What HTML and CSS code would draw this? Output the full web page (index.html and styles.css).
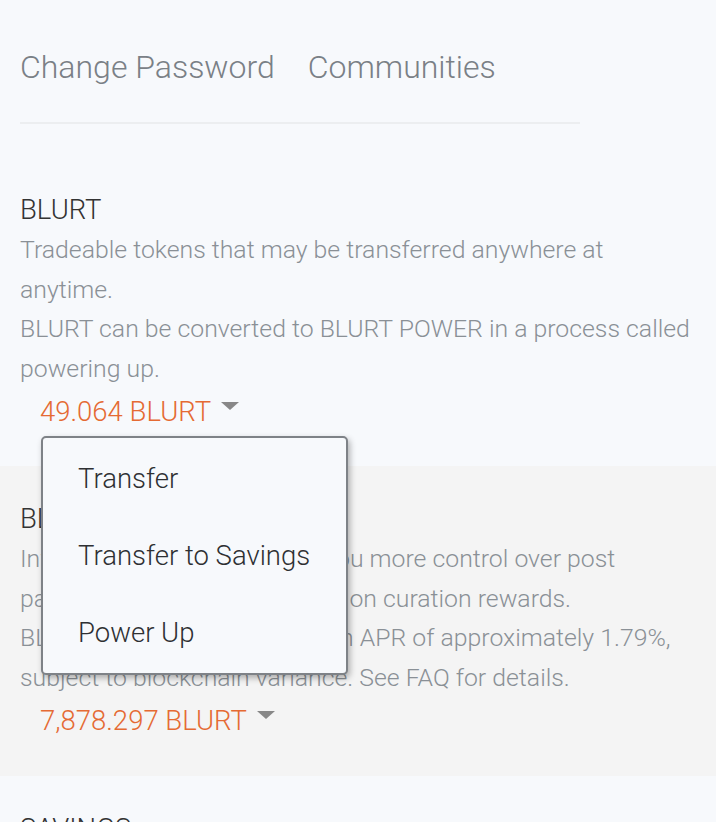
FILE: index.html
```html
<!DOCTYPE html>
<html lang="en">
<head>
<meta charset="utf-8">
<title>Wallet</title>
<link rel="stylesheet" href="styles.css">
</head>
<body>
<div class="page">
  <nav class="tabs">
    <a class="tab">Change Password</a>
    <a class="tab">Communities</a>
  </nav>
  <div class="rule"></div>

  <section class="balance">
    <h3 class="title">BLURT</h3>
    <p class="desc">Tradeable tokens that may be transferred anywhere at anytime.<br>BLURT can be converted to BLURT POWER in a process called powering up.</p>
    <div class="amount-wrap">
      <span class="amount">49.064 BLURT</span><span class="caret"></span>
      <ul class="menu">
        <li>Transfer</li>
        <li>Transfer to Savings</li>
        <li>Power Up</li>
      </ul>
    </div>
  </section>

  <section class="balance alt">
    <h3 class="title">BLURT POWER</h3>
    <p class="desc">Influence tokens which give you more control over post payouts and allow you to earn on curation rewards.<br>BLURT POWER increases at an APR of approximately 1.79%, subject to blockchain variance. See FAQ for details.</p>
    <div class="amount-wrap">
      <span class="amount">7,878.297 BLURT</span><span class="caret"></span>
    </div>
  </section>

  <section class="balance">
    <h3 class="title">SAVINGS</h3>
  </section>
</div>
</body>
</html>
```
FILE: styles.css
```css
html, body {
  margin: 0;
  padding: 0;
}
body {
  background: #f7f9fc;
  font-family: Roboto, "Noto Sans", sans-serif;
  font-weight: 300;
  overflow: hidden;
}
.page {
  width: 716px;
}
.tabs {
  display: flex;
  gap: 33px;
  padding: 46px 20px 0 20px;
  height: 42px;
}
.tab {
  font-size: 32px;
  line-height: 42px;
  color: #7a8086;
}
.rule {
  margin: 34px 0 33px 20px;
  width: 560px;
  height: 2px;
  background: #eceef0;
}
.balance {
  padding: 33px 20px 31px 20px;
}
.alt {
  background: #f4f4f4;
  padding-bottom: 32px;
}
.title {
  margin: 0;
  font-size: 27.5px;
  font-weight: 300;
  line-height: 40px;
  color: #333;
}
.desc {
  margin: 0;
  font-size: 24.8px;
  line-height: 39.7px;
  color: #8a9096;
}
.amount-wrap {
  position: relative;
  padding-left: 20px;
  height: 46px;
  display: flex;
  align-items: center;
}
.amount {
  font-size: 27.5px;
  line-height: 40px;
  color: #e56a33;
}
.caret {
  width: 0;
  height: 0;
  border-left: 9px solid transparent;
  border-right: 9px solid transparent;
  border-top: 8px solid #888;
  margin-left: 10px;
  margin-top: -12px;
}
.menu {
  position: absolute;
  left: 21px;
  top: 47px;
  width: 303px;
  margin: 0;
  padding: 2px 0;
  list-style: none;
  background: #f7f9fc;
  border: 2px solid #7e8287;
  border-radius: 5px;
  box-shadow: 2px 3px 6px rgba(0,0,0,0.3);
  z-index: 5;
}
.menu li {
  padding: 0 0 0 35px;
  font-size: 27.5px;
  font-weight: 300;
  line-height: 77px;
  color: #2e3033;
}
```
